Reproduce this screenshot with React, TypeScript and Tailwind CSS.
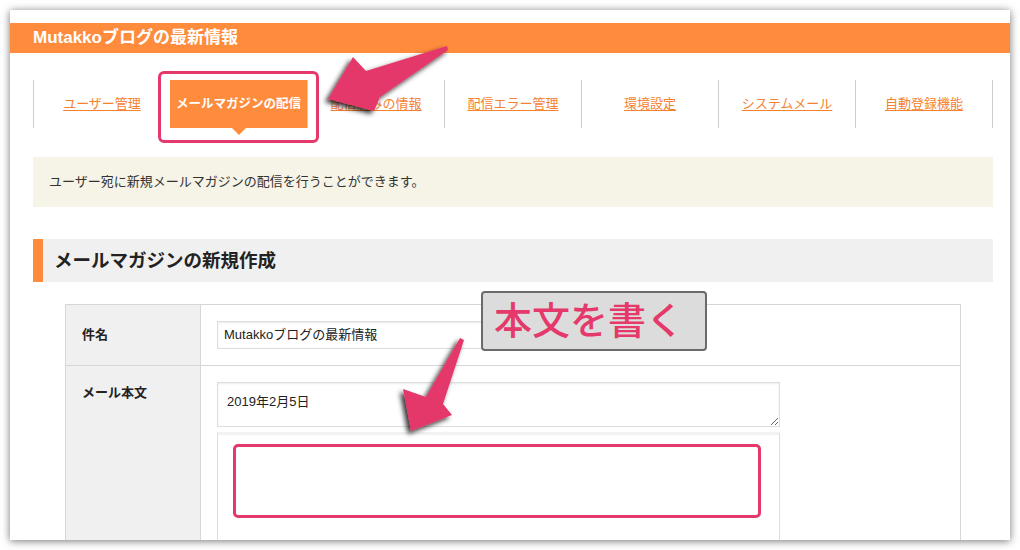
const tabs = [
  'ユーザー管理',
  'メールマガジンの配信',
  '配信済みの情報',
  '配信エラー管理',
  '環境設定',
  'システムメール',
  '自動登録機能',
]

const font = { fontFamily: '"Liberation Sans", "Noto Sans CJK JP", sans-serif' }

export default function App() {
  return (
    <div className="relative w-[1020px] h-[550px] bg-white overflow-hidden text-[#333]" style={font}>
      {/* window */}
      <div className="ml-[10px] mt-[10px] w-[1000px] h-[530px] bg-white overflow-hidden shadow-[0_1px_8px_rgba(0,0,0,0.55)]">
        <div className="mt-[13px] h-[30px] bg-[#ff8b3d] flex items-center pl-[23px] text-white text-[17px] font-bold">
          Mutakkoブログの最新情報
        </div>

        <div className="ml-[23px] w-[960px]">
          {/* tabs */}
          <div className="mt-[27px] grid grid-cols-7 border-r border-[#ccc]">
            {tabs.map((t, i) =>
              i === 1 ? (
                <div key={t} className="relative h-[48px] bg-[#ff8b3d] flex items-center justify-center text-white text-[12.5px] font-bold">
                  {t}
                  <span className="absolute left-1/2 -translate-x-1/2 top-full border-x-[7px] border-x-transparent border-t-[7px] border-t-[#ff8b3d]" />
                </div>
              ) : (
                <div key={t} className="h-[48px] border-l border-[#ccc] flex items-center justify-center text-[13px] text-[#f5822f] underline underline-offset-2">
                  {t}
                </div>
              ),
            )}
          </div>

          {/* info */}
          <div className="mt-[29px] h-[50px] bg-[#f6f3e7] flex items-center pl-[16px] text-[13px] text-[#333]">
            ユーザー宛に新規メールマガジンの配信を行うことができます。
          </div>

          {/* heading */}
          <div className="mt-[32px] h-[43px] bg-[#f0f0f0] flex items-center border-l-[10px] border-[#ff8b3d] pl-[11px] text-[18.5px] font-bold text-[#222]">
            メールマガジンの新規作成
          </div>

          {/* form table */}
          <div className="mt-[22px] ml-[32px] w-[896px] border border-[#d6d6d6]">
            <div className="flex h-[61px] border-b border-[#d6d6d6]">
              <div className="w-[135px] shrink-0 bg-[#f0f0f0] border-r border-[#d6d6d6] flex items-center pl-[16px] text-[13px] font-bold text-[#222]">
                件名
              </div>
              <div className="flex items-center pl-[16px]">
                <div className="w-[420px] h-[28px] border border-[#ddd] shadow-[inset_0_1px_2px_rgba(0,0,0,0.08)] flex items-center px-[6px] text-[13px] text-[#222]">
                  Mutakkoブログの最新情報
                </div>
              </div>
            </div>
            <div className="flex h-[200px]">
              <div className="w-[135px] shrink-0 bg-[#f0f0f0] border-r border-[#d6d6d6] pl-[16px] pt-[17px] text-[13px] font-bold text-[#222]">
                メール本文
              </div>
              <div className="pl-[16px] pt-[16px]">
                <textarea
                  readOnly
                  defaultValue="2019年2月5日"
                  className="block w-[563px] h-[45px] border border-[#ddd] px-[9px] pt-[9px] text-[13px] text-[#222] outline-none resize-y shadow-[inset_0_1px_2px_rgba(0,0,0,0.08)]"
                  style={font}
                />
                <div className="mt-[5px] w-[563px] h-[140px] border border-[#ddd] border-t-[3px] border-t-[#f2f2f2] pt-[9px] pl-[15px]">
                  <div className="w-[528px] h-[74px] border-[3px] border-[#e4396a] rounded-[5px]" />
                </div>
              </div>
            </div>
          </div>
        </div>
      </div>

      {/* highlight around active tab */}
      <div className="absolute left-[158px] top-[71px] w-[161px] h-[72px] border-[3px] border-[#e4396a] rounded-[6px]" />

      {/* callout */}
      <div className="absolute left-[481px] top-[291px] w-[226px] h-[60px] bg-[#dcdcdc] border-2 border-[#6b6b6b] rounded-[4px] flex items-center pl-[11px] text-[38px] font-medium text-[#e4396a] leading-none">
        本文を書く
      </div>

      {/* arrows */}
      <svg className="absolute inset-0 pointer-events-none" width="1020" height="550" viewBox="0 0 1020 550">
        <defs>
          <filter id="ds" x="-30%" y="-30%" width="160%" height="160%">
            <feDropShadow dx="-3" dy="3" stdDeviation="2.5" floodColor="#000" floodOpacity="0.8" />
          </filter>
        </defs>
        <polygon
          points="447,46 366,71 353,57 328,99 374,111 380,97 448,50"
          fill="#e4396a"
          filter="url(#ds)"
        />
        <polygon
          points="460,338 426,397 403,389 411,431 452,415 443,404 464,340"
          fill="#e4396a"
          filter="url(#ds)"
        />
      </svg>
    </div>
  )
}
